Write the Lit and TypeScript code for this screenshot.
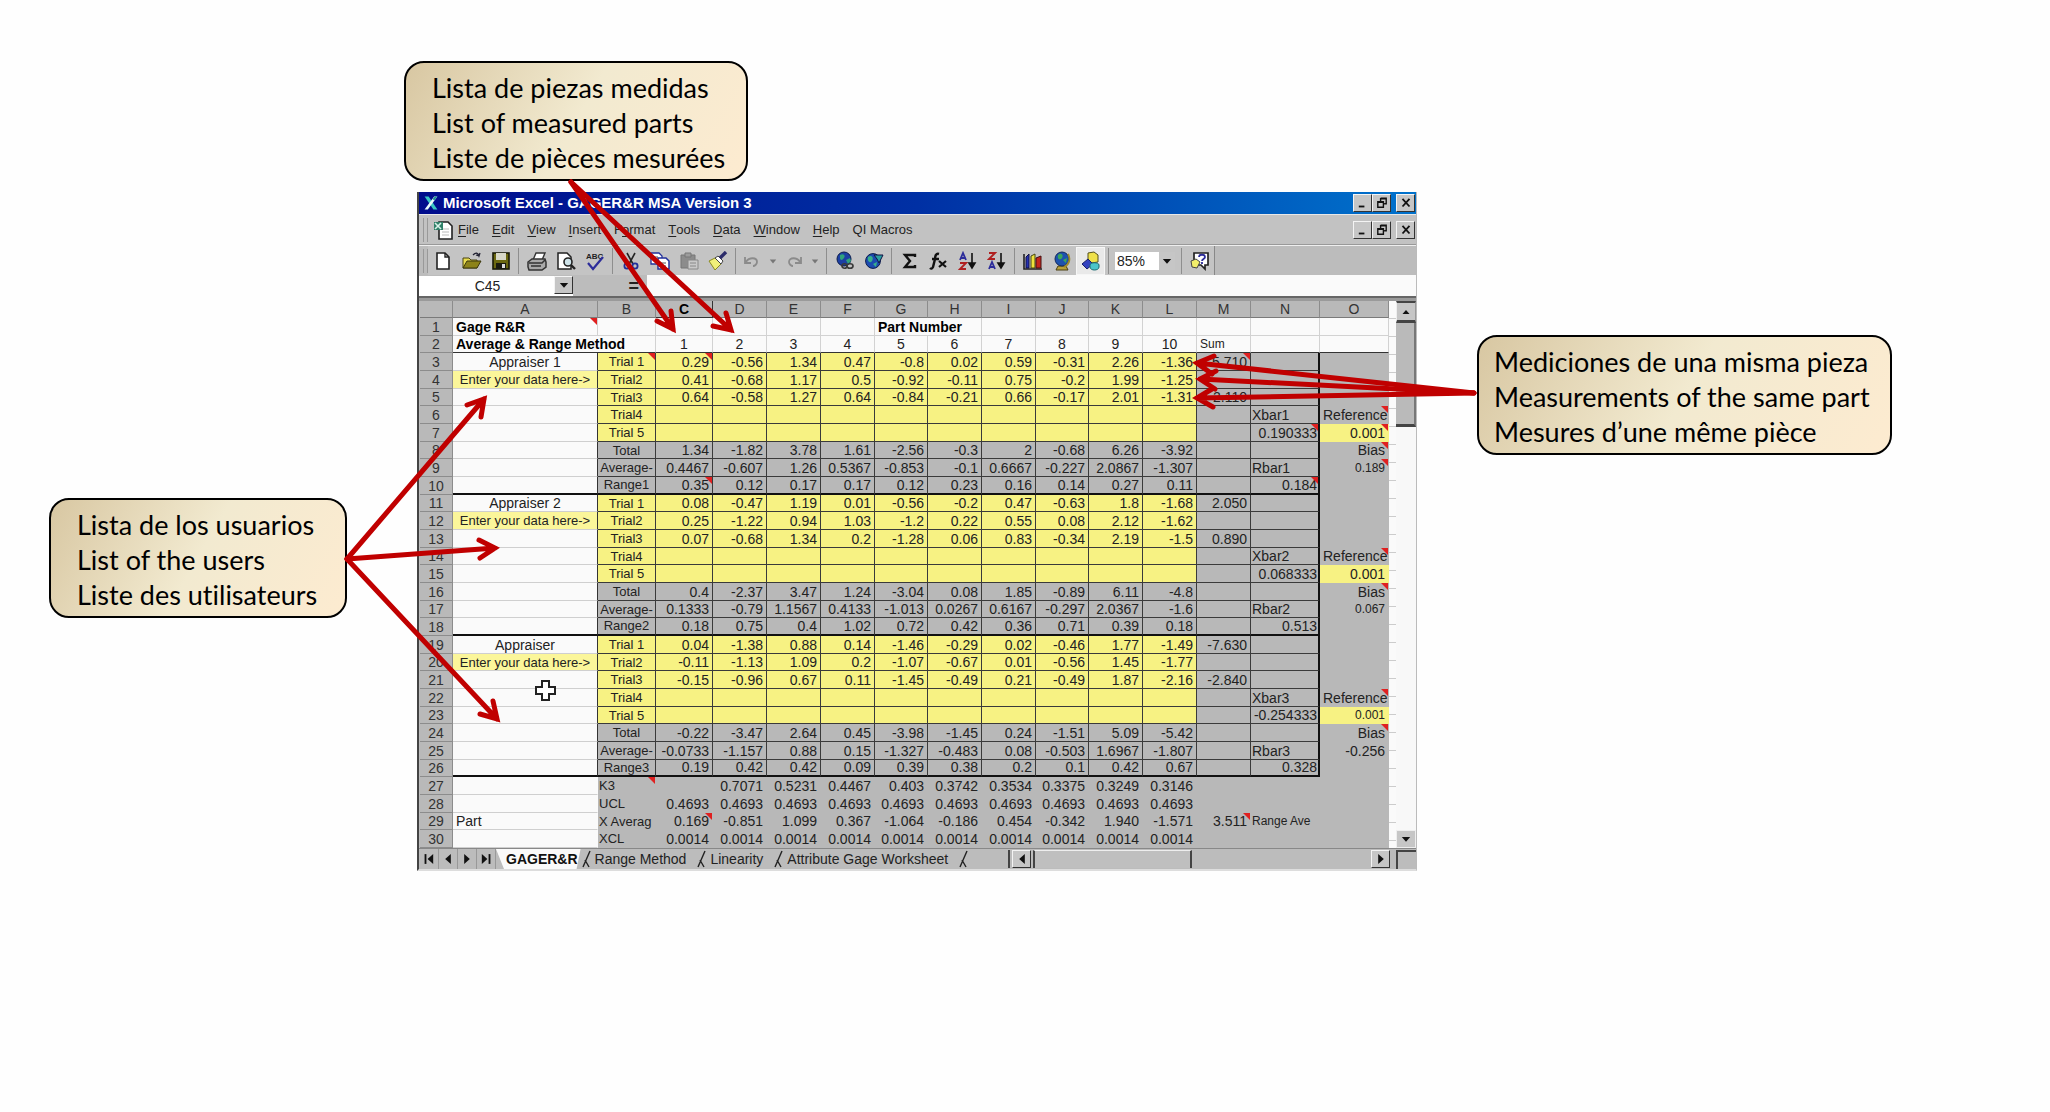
import { LitElement, html, svg, css, nothing } from "lit";
import { customElement, property } from "lit/decorators.js";
import { classMap } from "lit/directives/class-map.js";
import { styleMap } from "lit/directives/style-map.js";

/* ---------- icons ---------- */

const ICONS: Record<string, unknown> = {
  new: svg`<path d="M4 2h8l4 4v12H4z" fill="#fff" stroke="#222" stroke-width="1.6"/><path d="M12 2v4h4" fill="none" stroke="#222" stroke-width="1.4"/>`,
  open: svg`<path d="M1 7h6l2 2h6v8H1z" fill="#e8dc50" stroke="#4a4410"/><path d="M1 17l4-7h14l-4 7z" fill="#8d8318" stroke="#3a360c"/><path d="M11 4c3-3 5-2 6 1l1-3M17 5l-3-1" fill="none" stroke="#223" stroke-width="1.3"/>`,
  save: svg`<rect x="2" y="2" width="16" height="16" fill="#6b6810" stroke="#1a1a08" stroke-width="1.6"/><rect x="5" y="2" width="10" height="7" fill="#d8d8c8"/><rect x="5" y="12" width="10" height="6" fill="#1a1a10"/><rect x="11" y="13" width="3" height="4" fill="#ddd"/>`,
  print: svg`<path d="M6 9l3-7h9l-3 7z" fill="#fff" stroke="#333" stroke-width="1.4"/><path d="M1 11l4-3h13l1 3v5l-4 3H2l-1-3z" fill="#a9a9a9" stroke="#333" stroke-width="1.5"/><path d="M2 12h13l3-3M4 15h10" fill="none" stroke="#333" stroke-width="1.5"/>`,
  preview: svg`<path d="M2 2h9l4 4v12H2z" fill="#fff" stroke="#222" stroke-width="1.5"/><circle cx="12" cy="11" r="4" fill="#cfe4ea" stroke="#222" stroke-width="1.6"/><path d="M15 14l4 4" stroke="#222" stroke-width="2.4"/>`,
  spell: svg`<text x="1" y="8" font-size="8" font-weight="700" fill="#222" font-family="Liberation Sans, sans-serif">ABC</text><path d="M3 12l5 6L18 6" fill="none" stroke="#2c2c9a" stroke-width="2.2"/>`,
  cut: svg`<path d="M6 2l6 11M14 2L8 13" stroke="#222" stroke-width="1.6"/><circle cx="6" cy="15" r="2.6" fill="none" stroke="#22309a" stroke-width="1.8"/><circle cx="14" cy="15" r="2.6" fill="none" stroke="#22309a" stroke-width="1.8"/>`,
  copy: svg`<path d="M1 2h8l3 3v8H1z" fill="#fff" stroke="#22309a" stroke-width="1.3"/><path d="M8 7h8l3 3v8H8z" fill="#fff" stroke="#22309a" stroke-width="1.5"/><path d="M3 6h5M3 9h4M10 12h6M10 15h6" stroke="#555"/>`,
  paste: svg`<path d="M2 4h14v13H2z" fill="#8c8c8c" stroke="#777"/><path d="M6 2h6v4H6z" fill="#9c9c9c" stroke="#777"/><path d="M9 9h10v9H9z" fill="#c9c9c9" stroke="#888"/><path d="M11 12h6M11 15h6" stroke="#888"/>`,
  brush: svg`<path d="M1 10l6-3 6 6-6 6z" fill="#f1f07a" stroke="#8a8a20"/><path d="M7 7l3-2 5 5-2 3z" fill="#fff" stroke="#444"/><path d="M12 7l6-6" stroke="#2c2c6a" stroke-width="3.4"/>`,
  undo: svg`<path d="M3 6v6h6M4 11c3-5 11-5 11 0 0 2-2 4-4 4" fill="none" stroke="#8b8b8b" stroke-width="1.8"/>`,
  redo: svg`<path d="M17 6v6h-6M16 11c-3-5-11-5-11 0 0 2 2 4 4 4" fill="none" stroke="#8b8b8b" stroke-width="1.8"/>`,
  down: svg`<path d="M6 8h8l-4 5z" fill="#777"/>`,
  link: svg`<circle cx="9" cy="8" r="7" fill="#1c3fa4" stroke="#0c1c4c"/><path d="M5 4c3-2 6 0 4 3s-4 2-4 0zM11 9l4-2 1 3-3 3z" fill="#2fa37c"/><path d="M7 15c0-3 5-3 5 0s-5 3-5 0zM12 15c0-3 6-3 6 0s-6 3-6 0z" fill="none" stroke="#3a3a3a" stroke-width="1.7"/>`,
  web: svg`<circle cx="9" cy="10" r="7.4" fill="#1b4bb0" stroke="#0c1c4c"/><path d="M4 6c4-3 6 1 4 4s-5 0-4-4zM9 13l4-2-1 5z" fill="#38b08a"/><path d="M10 4h9l-4 8-2-4z" fill="#2a9fa0" stroke="#114"/>`,
  sum: svg`<path d="M15 6V4H5l5 6-5 6h10v-2" fill="none" stroke="#111" stroke-width="2.4"/>`,
  fx: svg`<path d="M10 3c-3-1-4 2-4 5l-2 8c-1 2-2 2-3 1M3 8h7" fill="none" stroke="#111" stroke-width="2.4"/><path d="M10 10l7 6M17 10l-7 6" stroke="#111" stroke-width="2.2"/>`,
  az: svg`<path d="M2 9l3-7 3 7M3 7h4" fill="none" stroke="#2c2c9a" stroke-width="1.8"/><path d="M2 12h6l-6 6h6" fill="none" stroke="#b02020" stroke-width="1.9"/><path d="M14 2v14M11 12l3 5 3-5z" fill="#111" stroke="#111" stroke-width="1.6"/>`,
  za: svg`<path d="M2 2h6L2 8h6" fill="none" stroke="#b02020" stroke-width="1.9"/><path d="M2 18l3-7 3 7M3 16h4" fill="none" stroke="#2c2c9a" stroke-width="1.8"/><path d="M14 2v14M11 12l3 5 3-5z" fill="#111" stroke="#111" stroke-width="1.6"/>`,
  chart: svg`<path d="M1 3v15h18" fill="none" stroke="#222" stroke-width="1.6"/><path d="M3 6l3-3v14H3z" fill="#2632b4" stroke="#114"/><path d="M8 5l4-2v14H8z" fill="#efe23c" stroke="#441"/><path d="M13 7l5-2v12h-5z" fill="#c3251c" stroke="#411"/>`,
  map: svg`<path d="M6 15h8l2 4H4z" fill="#b9a23a" stroke="#4a3f10"/><circle cx="10" cy="8" r="7" fill="#1d52ae" stroke="#132a5c"/><path d="M6 4c3-3 6 0 4 3s-5 1-4-3zM11 9l4-2-1 5z" fill="#3ba65a"/><path d="M16 3c3 5 1 11-4 13" fill="none" stroke="#a08c2c" stroke-width="1.8"/>`,
  draw: svg`<path d="M7 2l6-1 4 3v7l-7 1-3-3z" fill="#efe14a" stroke="#55501a"/><path d="M1 13l6-5 5 5-6 5z" fill="#3442c0" stroke="#1a206a"/><path d="M9 14c0-3 9-3 9 0v2c0 4-9 4-9 0z" fill="#4cc4c9" stroke="#1a6a70"/>`,
  help: svg`<path d="M4 2h14v12h-3v4l-4-4H4z" fill="#fff" stroke="#222" stroke-width="1.7"/><path d="M9 6c0-3 6-3 6 0 0 2-3 2-3 4M12 11v2" fill="none" stroke="#2c2c9a" stroke-width="1.8"/><path d="M1 10l5-2 4 3-3 6-5-1z" fill="#f2ee6a" stroke="#444"/>`,
  min: svg`<path d="M4 15h8" stroke="#111" stroke-width="2.6"/>`,
  restore: svg`<path d="M8 3h8v8h-3M8 3v4M8 4h8" fill="none" stroke="#111" stroke-width="2"/><path d="M4 8h8v8H4zM4 9h8" fill="none" stroke="#111" stroke-width="2"/>`,
  close: svg`<path d="M5 4l10 11M15 4L5 15" stroke="#111" stroke-width="2.6"/>`,
  xl: svg`<path d="M2 2h5l11 16h-5z" fill="#39c6c4"/><path d="M18 2h-4L2 18h4z" fill="#e8fbfb"/><path d="M12 5l3-3h3l-4 5z" fill="#1c8f90"/>`,
  doc: svg`<path d="M6 2h9l4 4v13H6z" fill="#fff" stroke="#222" stroke-width="1.6"/><path d="M9 9h7M9 12h7M9 15h7" stroke="#bbb"/><path d="M1 2h9v8H1z" fill="#2f8068"/><path d="M2 3l6 6M8 3L2 9" stroke="#d9f2ea" stroke-width="1.6"/>`,
  up: svg`<path d="M5 13h10l-5-6z" fill="#111"/>`,
  dn: svg`<path d="M4 7h12l-6 7z" fill="#111"/>`,
  left: svg`<path d="M14 3v14l-8-7z" fill="#111"/>`,
  right: svg`<path d="M6 3v14l8-7z" fill="#111"/>`,
  first: svg`<path d="M16 3v14l-8-7z" fill="#111"/><path d="M5 3v14" stroke="#111" stroke-width="2.6"/>`,
  last: svg`<path d="M4 3v14l8-7z" fill="#111"/><path d="M15 3v14" stroke="#111" stroke-width="2.6"/>`,
};

const icon = (name: string, cls = "icon") =>
  html`<svg class=${cls} viewBox="0 0 20 20" aria-hidden="true">${ICONS[name]}</svg>`;

/* ---------- worksheet data ---------- */

const LETTERS = ["A", "B", "C", "D", "E", "F", "G", "H", "I", "J", "K", "L", "M", "N", "O"];
const WIDTHS = [33, 145, 58, 57, 54, 54, 54, 53, 54, 54, 53, 54, 54, 54, 69, 69];
const WIDTH_SUM = WIDTHS.reduce((a, b) => a + b, 0);

interface Row {
  a?: string;
  b?: string;
  v?: string;
  m?: string;
  n?: string;
  o?: string;
}

const ROWS: Record<number, Row> = {
  3: { a: "Appraiser 1", b: "Trial 1", v: "0.29 -0.56 1.34 0.47 -0.8 0.02 0.59 -0.31 2.26 -1.36", m: "5.710" },
  4: { a: "Enter your data here->", b: "Trial2", v: "0.41 -0.68 1.17 0.5 -0.92 -0.11 0.75 -0.2 1.99 -1.25" },
  5: { b: "Trial3", v: "0.64 -0.58 1.27 0.64 -0.84 -0.21 0.66 -0.17 2.01 -1.31", m: "2.110" },
  6: { b: "Trial4", n: "Xbar1", o: "Reference" },
  7: { b: "Trial 5", n: "0.190333", o: "0.001" },
  8: { b: "Total", v: "1.34 -1.82 3.78 1.61 -2.56 -0.3 2 -0.68 6.26 -3.92", o: "Bias" },
  9: { b: "Average-", v: "0.4467 -0.607 1.26 0.5367 -0.853 -0.1 0.6667 -0.227 2.0867 -1.307", n: "Rbar1", o: "0.189" },
  10: { b: "Range1", v: "0.35 0.12 0.17 0.17 0.12 0.23 0.16 0.14 0.27 0.11", n: "0.184" },
  11: { a: "Appraiser 2", b: "Trial 1", v: "0.08 -0.47 1.19 0.01 -0.56 -0.2 0.47 -0.63 1.8 -1.68", m: "2.050" },
  12: { a: "Enter your data here->", b: "Trial2", v: "0.25 -1.22 0.94 1.03 -1.2 0.22 0.55 0.08 2.12 -1.62" },
  13: { b: "Trial3", v: "0.07 -0.68 1.34 0.2 -1.28 0.06 0.83 -0.34 2.19 -1.5", m: "0.890" },
  14: { b: "Trial4", n: "Xbar2", o: "Reference" },
  15: { b: "Trial 5", n: "0.068333", o: "0.001" },
  16: { b: "Total", v: "0.4 -2.37 3.47 1.24 -3.04 0.08 1.85 -0.89 6.11 -4.8", o: "Bias" },
  17: { b: "Average-", v: "0.1333 -0.79 1.1567 0.4133 -1.013 0.0267 0.6167 -0.297 2.0367 -1.6", n: "Rbar2", o: "0.067" },
  18: { b: "Range2", v: "0.18 0.75 0.4 1.02 0.72 0.42 0.36 0.71 0.39 0.18", n: "0.513" },
  19: { a: "Appraiser", b: "Trial 1", v: "0.04 -1.38 0.88 0.14 -1.46 -0.29 0.02 -0.46 1.77 -1.49", m: "-7.630" },
  20: { a: "Enter your data here->", b: "Trial2", v: "-0.11 -1.13 1.09 0.2 -1.07 -0.67 0.01 -0.56 1.45 -1.77" },
  21: { b: "Trial3", v: "-0.15 -0.96 0.67 0.11 -1.45 -0.49 0.21 -0.49 1.87 -2.16", m: "-2.840" },
  22: { b: "Trial4", n: "Xbar3", o: "Reference" },
  23: { b: "Trial 5", n: "-0.254333", o: "0.001" },
  24: { b: "Total", v: "-0.22 -3.47 2.64 0.45 -3.98 -1.45 0.24 -1.51 5.09 -5.42", o: "Bias" },
  25: { b: "Average-", v: "-0.0733 -1.157 0.88 0.15 -1.327 -0.483 0.08 -0.503 1.6967 -1.807", n: "Rbar3", o: "-0.256" },
  26: { b: "Range3", v: "0.19 0.42 0.42 0.09 0.39 0.38 0.2 0.1 0.42 0.67", n: "0.328" },
  27: { b: "K3", v: "_ 0.7071 0.5231 0.4467 0.403 0.3742 0.3534 0.3375 0.3249 0.3146" },
  28: { b: "UCL", v: "0.4693 0.4693 0.4693 0.4693 0.4693 0.4693 0.4693 0.4693 0.4693 0.4693" },
  29: { a: "Part", b: "X Averag", v: "0.169 -0.851 1.099 0.367 -1.064 -0.186 0.454 -0.342 1.940 -1.571", m: "3.511", n: "Range Ave" },
  30: { b: "XCL", v: "0.0014 0.0014 0.0014 0.0014 0.0014 0.0014 0.0014 0.0014 0.0014 0.0014" },
};

const NOTES = new Set([
  "B3", "C3", "M3", "O6", "N7", "O7", "O8", "O9", "C10", "N10", "O14", "O16", "O22", "O24", "B27", "C29", "M29",
]);

/* ---------- worksheet ---------- */

@customElement("gage-sheet")
export class GageSheet extends LitElement {
  static styles = css`
    :host {
      display: block;
      flex: 1;
      min-width: 0;
    }
    table {
      width: 100%;
      table-layout: fixed;
      border-collapse: separate;
      border-spacing: 0;
      font: 14px/16px "Liberation Sans", sans-serif;
      color: #222;
    }
    th,
    td {
      box-sizing: border-box;
      height: 18px;
      padding: 0 3px;
      overflow: hidden;
      white-space: nowrap;
      text-align: right;
      border-right: 1px solid transparent;
      border-bottom: 1px solid transparent;
      position: relative;
    }
    tbody tr:nth-child(3n + 2) > * {
      height: 17px;
      line-height: 15px;
    }
    th {
      font-weight: 400;
      text-align: center;
      background: #b9b9b9;
      border-color: #8c8c8c;
      color: #333;
    }
    thead th {
      height: 17px;
      line-height: 15px;
      border-bottom-color: #7a7a7a;
    }
    thead .current {
      color: #000;
      font-weight: 700;
      border-color: #333;
    }
    .plain {
      background: #fafafa;
      border-color: #d2d2d2;
    }
    .center {
      text-align: center;
    }
    .left {
      text-align: left;
    }
    .title {
      font-weight: 700;
      color: #000;
    }
    .top td {
      border-bottom-color: #333;
    }
    .label {
      background: #fafafa;
      border-bottom-color: #cfcfcf;
      border-right-color: #333;
    }
    .open {
      border-right-color: transparent;
    }
    .edge {
      border-bottom: 2px solid #111;
    }
    .yellow {
      background: #f7f283;
    }
    .prompt {
      background: #fbf69a;
      padding: 0;
    }
    .gray {
      background: #b8b8b8;
    }
    .boxed {
      border-color: #3a3a3a;
    }
    .boxed.edge {
      border-bottom-color: #111;
    }
    .strong {
      border-right: 2px solid #111;
    }
    .tight {
      padding: 0 1px;
    }
    .fit {
      font-size: 13px;
    }
    .small {
      font-size: 12px;
    }
    .note::after {
      content: "";
      position: absolute;
      top: 0;
      right: 0;
      border-top: 7px solid #e02020;
      border-left: 7px solid transparent;
    }
  `;

  private cell(r: number, col: string, text: string, cls: Record<string, boolean>) {
    return html`<td class=${classMap({ ...cls, note: NOTES.has(col + r) })}>${text}</td>`;
  }

  private row(r: number) {
    const d = ROWS[r];
    const vals = d.v ? d.v.split(" ") : Array(10).fill("_");
    const step = (r - 3) % 8;
    const foot = r > 26;
    const edge = !foot && step === 7;
    const trial = !foot && step < 5;
    const fill = { yellow: trial, gray: !trial, boxed: !foot, edge };
    const prompt = !foot && step === 1;
    const refYellow = !foot && step === 4;
    return html`<tr>
      <th scope="row">${r}</th>
      ${this.cell(r, "A", d.a ?? "", { label: true, prompt, fit: prompt, open: foot, edge, center: !foot, left: foot })}
      ${this.cell(r, "B", d.b ?? "", { ...fill, center: !foot, left: foot, tight: true, fit: true })}
      ${vals.map((t: string, i: number) => this.cell(r, LETTERS[i + 2], t === "_" ? "" : t, fill))}
      ${this.cell(r, "M", d.m ?? "", { gray: true, boxed: !foot, edge })}
      ${this.cell(r, "N", d.n ?? "", {
        gray: true,
        boxed: !foot,
        strong: !foot,
        edge,
        left: foot || /bar/.test(d.n ?? ""),
        small: foot,
        tight: true,
      })}
      ${this.cell(r, "O", d.o ?? "", { gray: !refYellow, yellow: refYellow, small: r === 9 || r === 17 || r === 23 })}
    </tr>`;
  }

  render() {
    const blanks = (n: number) => Array.from({ length: n }, () => html`<td class="plain"></td>`);
    return html`<table>
      <colgroup>
        ${WIDTHS.map((w) => html`<col style=${styleMap({ width: `${(w / WIDTH_SUM) * 100}%` })} />`)}
      </colgroup>
      <thead>
        <tr>
          <th></th>
          ${LETTERS.map((l) => html`<th scope="col" class=${l === "C" ? "current" : nothing}>${l}</th>`)}
        </tr>
      </thead>
      <tbody>
        <tr>
          <th scope="row">1</th>
          <td class="plain left title note">Gage R&amp;R</td>
          ${blanks(5)}
          <td class="plain left title" colspan="2">Part Number</td>
          ${blanks(7)}
        </tr>
        <tr class="top">
          <th scope="row">2</th>
          <td class="plain left title" colspan="2">Average &amp; Range Method</td>
          ${[1, 2, 3, 4, 5, 6, 7, 8, 9, 10].map((n) => html`<td class="plain center">${n}</td>`)}
          <td class="plain left small">Sum</td>
          <td class="plain"></td>
          <td class="plain"></td>
        </tr>
        ${Object.keys(ROWS).map((r) => this.row(Number(r)))}
      </tbody>
    </table>`;
  }
}

/* ---------- spreadsheet window ---------- */

@customElement("excel-window")
export class ExcelWindow extends LitElement {
  static styles = css`
    :host {
      display: block;
      min-width: 0;
      box-sizing: border-box;
      border-left: 2px solid #444;
      border-right: 1px solid #bbb;
      border-bottom: 2px solid #ddd;
      background: #bcbcbc;
      font: 13px/16px "Liberation Sans", sans-serif;
      color: #222;
    }
    button {
      font: inherit;
      color: inherit;
      padding: 0;
      border: 0;
      background: none;
      display: flex;
      align-items: center;
      justify-content: center;
    }
    .icon {
      width: 20px;
      height: 20px;
      display: block;
    }
    .glyph {
      width: 14px;
      height: 14px;
      display: block;
    }
    .bar {
      display: flex;
      align-items: center;
      box-sizing: border-box;
    }
    .titlebar {
      height: 22px;
      padding: 0 1px 0 4px;
      background: linear-gradient(90deg, #000c8c, #0030a4 50%, #0072cc);
      color: #fff;
    }
    .titlebar > .glyph {
      width: 16px;
      height: 16px;
    }
    h1 {
      margin: 0 auto 0 4px;
      font: 700 15px/20px "Liberation Sans", sans-serif;
    }
    .controls {
      display: flex;
      margin-left: auto;
    }
    .raised,
    .controls button {
      box-sizing: border-box;
      width: 19px;
      height: 18px;
      background: #c6c6c6;
      border: 1px solid;
      border-color: #f4f4f4 #333 #333 #f4f4f4;
    }
    .controls .last {
      margin-left: 5px;
    }
    .menubar {
      height: 31px;
      padding: 0 1px 0 4px;
      background: #c2c2c2;
      border-top: 1px solid #e8e8e8;
      border-bottom: 1px solid #999;
    }
    .grip {
      width: 3px;
      height: 24px;
      border: solid #999;
      border-width: 0 1px;
      flex: none;
    }
    .docicon {
      margin: 0 5px 0 5px;
    }
    nav {
      display: flex;
      gap: 13px;
    }
    u {
      text-underline-offset: 2px;
    }
    .toolbar {
      height: 30px;
      padding-left: 4px;
      border-top: 1px solid #eee;
      background: #bcbcbc;
    }
    .tools {
      display: flex;
      align-items: center;
      height: 29px;
      border-right: 1px solid #888;
      background: #c4c4c4;
    }
    .tools button {
      width: 29px;
      height: 28px;
    }
    .tools .narrow {
      width: 16px;
    }
    .tools .history {
      width: 26px;
    }
    .tools .pressed {
      box-sizing: border-box;
      background: #e9e9e9;
      border: 1px solid #f6f6f6;
    }
    .sep {
      width: 1px;
      height: 26px;
      margin: 0 3px;
      background: #8e8e8e;
    }
    .combo {
      display: flex;
      margin: 0 3px;
      background: #fff;
    }
    .combo input,
    .namebox input {
      border: 0;
      padding: 0 0 0 2px;
      box-sizing: border-box;
      width: 44px;
      height: 18px;
      background: #fff;
      color: #222;
      font: 14px/18px "Liberation Sans", sans-serif;
    }
    .tools .combo button {
      width: 16px;
      height: 18px;
      background: #c6c6c6;
    }
    .formulabar {
      height: 23px;
      border-bottom: 2px solid #666;
    }
    .namebox {
      display: flex;
      width: 154px;
      background: #fff;
    }
    .namebox input {
      flex: 1;
      min-width: 0;
      height: 20px;
      text-align: center;
    }
    .equals {
      width: 74px;
      text-align: right;
      padding-right: 8px;
      box-sizing: border-box;
      font-weight: 700;
      font-size: 18px;
    }
    .formula {
      flex: 1;
      min-width: 0;
      height: 21px;
      padding: 0;
      border: 0;
      background: #fafafa;
    }
    .body {
      display: flex;
      border-top: 3px solid #9a9a9a;
      padding-left: 1px;
    }
    .ticks {
      width: 7px;
      background: repeating-linear-gradient(#fafafa 0 17px, #ccc 17px 18px);
    }
    .vscroll {
      display: flex;
      flex-direction: column;
      width: 20px;
      background: #f8f8f8;
    }
    .vscroll .raised {
      height: 22px;
      border-width: 2px 1px 3px;
      border-color: #444 #999 #444 #eee;
      width: 20px;
    }
    .vthumb {
      height: 101px;
      background: #bababa;
      border-bottom: 3px solid #444;
      border-right: 2px solid #777;
    }
    .vscroll .end {
      margin-top: auto;
      height: 18px;
      border-width: 1px;
      border-color: #eee;
    }
    .footer {
      height: 21px;
      padding-left: 1px;
      border-top: 1px solid #888;
      background: #bcbcbc;
    }
    .nav {
      width: 19px;
      height: 20px;
      box-sizing: border-box;
      border-right: 1px solid #999;
    }
    .tabs {
      display: flex;
      height: 20px;
      align-items: center;
      font-size: 14px;
    }
    .tabs button {
      height: 20px;
      padding: 0 10px 0 4px;
      white-space: nowrap;
    }
    .tabs .active {
      font-weight: 700;
      background: #fafafa;
      color: #111;
      padding: 0 3px 0 10px;
      clip-path: polygon(0 0, 100% 0, calc(100% - 4px) 100%, 8px 100%);
    }
    .slash {
      width: 10px;
      height: 18px;
    }
    .hscroll {
      display: flex;
      flex: 1;
      max-width: 378px;
      margin-left: auto;
      border-left: 2px solid #444;
      padding-left: 2px;
    }
    .hthumb {
      width: 42%;
      margin-left: 2px;
      box-sizing: border-box;
      background: #bfbfbf;
      border: solid #444;
      border-width: 0 2px;
      border-top: 1px solid #eee;
    }
    .hscroll .end {
      margin-left: auto;
    }
    .corner {
      width: 20px;
      height: 19px;
      margin-left: 6px;
      box-sizing: border-box;
      border: solid #444;
      border-width: 2px 0 0 2px;
    }
  `;

  private controls() {
    return html`<div class="controls">
      <button aria-label="Minimize">${icon("min", "glyph")}</button>
      <button aria-label="Restore">${icon("restore", "glyph")}</button>
      <button class="last" aria-label="Close">${icon("close", "glyph")}</button>
    </div>`;
  }

  private tool(name: string, label: string, cls = "") {
    return html`<button class=${cls} aria-label=${label}>${icon(name)}</button>`;
  }

  render() {
    const sep = html`<span class="sep"></span>`;
    const slash = html`<svg class="slash" viewBox="0 0 10 18" aria-hidden="true">
      <path d="M9 1L2 17M4 10l4 7" fill="none" stroke="#222" stroke-width="1.4" />
    </svg>`;
    const menu = (key: string, pre: string, rest: string) => html`<button>${pre}<u>${key}</u>${rest}</button>`;
    return html`
      <header class="bar titlebar">
        ${icon("xl", "glyph")}
        <h1>Microsoft Excel - GAGER&amp;R MSA Version 3</h1>
        ${this.controls()}
      </header>
      <div class="bar menubar">
        <span class="grip"></span>
        <span class="docicon">${icon("doc")}</span>
        <nav>
          ${menu("F", "", "ile")} ${menu("E", "", "dit")} ${menu("V", "", "iew")} ${menu("I", "", "nsert")}
          ${menu("o", "F", "rmat")} ${menu("T", "", "ools")} ${menu("D", "", "ata")} ${menu("W", "", "indow")}
          ${menu("H", "", "elp")} <button>QI Macros</button>
        </nav>
        ${this.controls()}
      </div>
      <div class="bar toolbar">
        <span class="grip"></span>
        <div class="tools">
          ${this.tool("new", "New")}${this.tool("open", "Open")}${this.tool("save", "Save")}${sep}
          ${this.tool("print", "Print")}${this.tool("preview", "Print preview")}${this.tool("spell", "Spelling")}${sep}
          ${this.tool("cut", "Cut")}${this.tool("copy", "Copy")}${this.tool("paste", "Paste")}
          ${this.tool("brush", "Format painter")}${sep}
          ${this.tool("undo", "Undo", "history")}${this.tool("down", "Undo list", "narrow")}
          ${this.tool("redo", "Redo", "history")}${this.tool("down", "Redo list", "narrow")}${sep}
          ${this.tool("link", "Insert hyperlink")}${this.tool("web", "Web toolbar")}${sep}
          ${this.tool("sum", "AutoSum")}${this.tool("fx", "Paste function")}${this.tool("az", "Sort ascending")}
          ${this.tool("za", "Sort descending")}${sep}
          ${this.tool("chart", "Chart wizard")}${this.tool("map", "Map")}${this.tool("draw", "Drawing", "pressed")}${sep}
          <div class="combo">
            <input aria-label="Zoom" .value=${"85%"} />
            <button aria-label="Zoom list">${icon("dn", "glyph")}</button>
          </div>
          ${sep}${this.tool("help", "Assistant")}
        </div>
      </div>
      <div class="bar formulabar">
        <div class="namebox">
          <input aria-label="Name box" .value=${"C45"} />
          <button class="raised" aria-label="Name list">${icon("dn", "glyph")}</button>
        </div>
        <span class="equals">=</span>
        <input class="formula" aria-label="Formula" />
      </div>
      <div class="body">
        <gage-sheet></gage-sheet>
        <div class="ticks"></div>
        <div class="vscroll">
          <button class="raised" aria-label="Scroll up">${icon("up", "glyph")}</button>
          <div class="vthumb"></div>
          <button class="raised end" aria-label="Scroll down">${icon("dn", "glyph")}</button>
        </div>
      </div>
      <footer class="bar footer">
        ${["first", "left", "right", "last"].map(
          (n) => html`<button class="nav" aria-label=${`${n} sheet`}>${icon(n, "glyph")}</button>`
        )}
        <div class="tabs">
          <button class="active">GAGER&amp;R</button>${slash}
          <button>Range Method</button>${slash}
          <button>Linearity</button>${slash}
          <button>Attribute Gage Worksheet</button>${slash}
        </div>
        <div class="hscroll">
          <button class="raised" aria-label="Scroll left">${icon("left", "glyph")}</button>
          <div class="hthumb"></div>
          <button class="raised end" aria-label="Scroll right">${icon("right", "glyph")}</button>
        </div>
        <span class="corner"></span>
      </footer>
    `;
  }
}

/* ---------- callout ---------- */

@customElement("call-out")
export class CallOut extends LitElement {
  @property({ attribute: false }) lines: string[] = [];

  static styles = css`
    :host {
      display: block;
      box-sizing: border-box;
      padding: 7px 0 4px 26px;
      border: 2px solid #000;
      border-radius: 20px;
      background: linear-gradient(120deg, #d8c7a2, #f2ead0 50%, #fdebd0);
      color: #000;
      font: 27px/35px Lato, "Open Sans", sans-serif;
      font-variant-ligatures: none;
    }
    p {
      margin: 0;
      white-space: nowrap;
    }
  `;

  render() {
    return this.lines.map((l) => html`<p>${l}</p>`);
  }
}

/* ---------- slide ---------- */

type Point = [number, number];
const ARROWS: [Point, Point][] = [
  [[571, 182], [676, 333]],
  [[571, 182], [735, 333]],
  [[347, 559], [487, 395]],
  [[347, 559], [500, 548]],
  [[347, 559], [500, 723]],
  [[1474, 393], [1192, 362]],
  [[1474, 393], [1195, 379]],
  [[1474, 393], [1192, 398]],
];

/* The mitred corner reaches past the vertex, so the vertex is set back from the tip. */
const MITRE = 5;

const arrowPath = ([[x1, y1], [tipX, tipY]]: [Point, Point]) => {
  const dir = Math.atan2(tipY - y1, tipX - x1);
  const x2 = Math.round(tipX - MITRE * Math.cos(dir));
  const y2 = Math.round(tipY - MITRE * Math.sin(dir));
  const arm = (turn: number) => {
    const t = dir + Math.PI + turn;
    return `${Math.round(x2 + 18 * Math.cos(t))} ${Math.round(y2 + 18 * Math.sin(t))}`;
  };
  return `M${x1} ${y1}L${x2} ${y2}M${arm(0.52)}L${x2} ${y2}L${arm(-0.52)}`;
};

@customElement("app-root")
export class AppRoot extends LitElement {
  static styles = css`
    :host {
      display: block;
      background: #fefefe;
    }
    .slide {
      position: relative;
      display: grid;
      grid-template-columns: 417fr 1000fr 633fr;
      align-items: start;
      box-sizing: border-box;
      min-height: 100vh;
      padding-top: 192px;
      overflow: hidden;
    }
    excel-window {
      grid-column: 2;
    }
    call-out {
      position: absolute;
    }
    .parts {
      left: 404px;
      top: 61px;
      width: 344px;
    }
    .users {
      left: 49px;
      top: 498px;
      width: 298px;
    }
    .measures {
      left: 1477px;
      top: 335px;
      width: 415px;
      padding-left: 15px;
    }
    .overlay {
      position: absolute;
      inset: 0;
      width: 100%;
      height: 1112px;
      pointer-events: none;
    }
    .arrows {
      fill: none;
      stroke: #c00000;
      stroke-width: 5;
    }
    .heads {
      stroke-linecap: round;
    }
  `;

  render() {
    return html`<main class="slide">
      <excel-window></excel-window>
      <call-out class="parts" .lines=${["Lista de piezas medidas", "List of measured parts", "Liste de pièces mesurées"]}></call-out>
      <call-out class="users" .lines=${["Lista de los usuarios", "List of the users", "Liste des utilisateurs"]}></call-out>
      <call-out
        class="measures"
        .lines=${["Mediciones de una misma pieza", "Measurements of the same part", "Mesures d’une même pièce"]}
      ></call-out>
      <svg class="overlay" viewBox="0 0 2050 1112" preserveAspectRatio="none" aria-hidden="true">
        <path
          d="M542 681h7v6h6v7h-6v6h-7v-6h-6v-7h6z"
          fill="#fff"
          stroke="#222"
          stroke-width="2"
        />
        <g class="arrows heads">${ARROWS.map((a) => svg`<path d=${arrowPath(a)} />`)}</g>
      </svg>
    </main>`;
  }
}
